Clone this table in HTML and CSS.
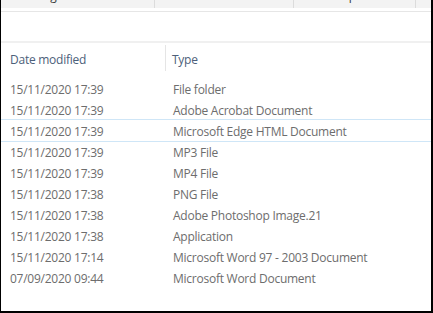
FILE: index.html
```html
<!DOCTYPE html>
<html>
<head>
<meta charset="utf-8">
<link rel="stylesheet" href="styles.css">
</head>
<body>
<div class="frame">
  <div class="ribbon">
    <div class="group g-org"><span>Organize</span></div>
    <div class="group g-new"><span>New</span></div>
    <div class="group g-open"><span>Open</span></div>
    <div class="group g-rest"></div>
  </div>
  <div class="ribbon-line"></div>
  <div class="address-area"></div>
  <div class="pane-gap"></div>
  <div class="list">
    <div class="header">
      <div class="hcell hdate">Date modified</div>
      <div class="hcell htype">Type</div>
    </div>
    <div class="row"><div class="c-date">15/11/2020 17:39</div><div class="c-type">File folder</div></div>
    <div class="row"><div class="c-date">15/11/2020 17:39</div><div class="c-type">Adobe Acrobat Document</div></div>
    <div class="row focus"><div class="c-date">15/11/2020 17:39</div><div class="c-type">Microsoft Edge HTML Document</div></div>
    <div class="row"><div class="c-date">15/11/2020 17:39</div><div class="c-type">MP3 File</div></div>
    <div class="row"><div class="c-date">15/11/2020 17:39</div><div class="c-type">MP4 File</div></div>
    <div class="row"><div class="c-date">15/11/2020 17:38</div><div class="c-type">PNG File</div></div>
    <div class="row"><div class="c-date">15/11/2020 17:38</div><div class="c-type">Adobe Photoshop Image.21</div></div>
    <div class="row"><div class="c-date">15/11/2020 17:38</div><div class="c-type">Application</div></div>
    <div class="row"><div class="c-date">15/11/2020 17:14</div><div class="c-type">Microsoft Word 97 - 2003 Document</div></div>
    <div class="row"><div class="c-date">07/09/2020 09:44</div><div class="c-type">Microsoft Word Document</div></div>
  </div>
</div>
</body>
</html>
```

FILE: styles.css
```css
html, body {
  margin: 0;
  padding: 0;
  background: #ffffff;
}
.frame {
  width: 433px;
  height: 313px;
  box-sizing: border-box;
  border-left: 1px solid #000;
  border-right: 2px solid #000;
  border-bottom: 2px solid #000;
  display: flex;
  flex-direction: column;
  overflow: hidden;
  font-family: "Open Sans", "Noto Sans", sans-serif;
  font-size: 12px;
  letter-spacing: -0.25px;
}
.ribbon {
  height: 8px;
  background: #f3f3f3;
  display: flex;
  overflow: hidden;
  flex-shrink: 0;
}
.group {
  display: flex;
  justify-content: center;
  border-right: 1px solid #dcdcdc;
  color: #3a3a3a;
  line-height: 16px;
}
.group span {
  margin-top: -12px;
}
.g-org { padding-right: 34px; box-sizing: border-box; width: 154px; }
.g-new { width: 138px; }
.g-open { width: 121px; }
.g-rest { flex: 1; border-right: none; }
.ribbon-line {
  height: 1px;
  margin-top: 3px;
  background: #e6e6e6;
  flex-shrink: 0;
}
.address-area {
  height: 29px;
  flex-shrink: 0;
}
.pane-gap {
  height: 2px;
  background: #f0f0f0;
  flex-shrink: 0;
}
.list {
  flex: 1;
  display: flex;
  flex-direction: column;
}
.header {
  height: 35px;
  display: flex;
  align-items: flex-start;
  color: #4c607a;
  flex-shrink: 0;
}
.hcell {
  line-height: 16px;
}
.hdate {
  width: 165px;
  box-sizing: border-box;
  margin-top: 2px;
  height: 26px;
  padding: 7px 0 0 9px;
  border-right: 1px solid #e5e5e5;
}
.htype {
  padding: 9px 0 0 6px;
}
.row {
  height: 21px;
  display: flex;
  align-items: center;
  padding-top: 1px;
  color: #6d6d6d;
  box-sizing: border-box;
}
.row.focus {
  box-shadow: 0 -1px 0 #cfe6f7, 0 1px 0 #cfe6f7;
}
.c-date {
  width: 165px;
  box-sizing: border-box;
  padding-left: 9px;
}
.c-type {
  padding-left: 7px;
}
```
